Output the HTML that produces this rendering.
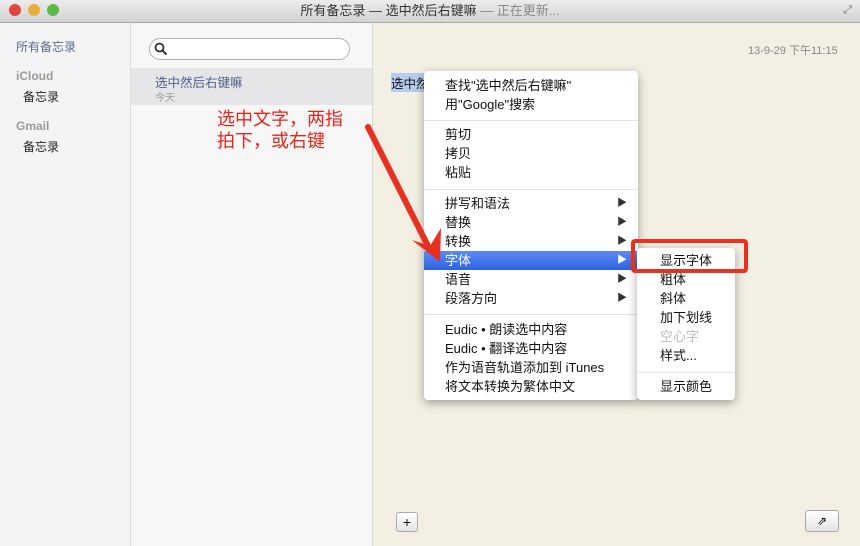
<html><head><style>
body{margin:0;width:860px;height:546px;overflow:hidden;font-family:"Liberation Sans","Noto Sans CJK SC",sans-serif;position:relative;background:#f3f0e3}
.a{position:absolute}
#tb{left:0;top:0;width:860px;height:22px;background:linear-gradient(#ececec,#d3d3d3);border-bottom:1px solid #a8a8a8;font-size:13px;color:#333;text-align:center;line-height:22px}
.dot{top:4px;width:12px;height:12px;border-radius:50%}
#sb{left:0;top:23px;width:130px;height:523px;background:#f4f4f6;border-right:1px solid #dcdcdc}
#ls{left:131px;top:23px;width:241px;height:523px;background:#f7f7f7;border-right:1px solid #d8d8d8}
#menu{left:424px;top:71px;width:214px;height:329px;background:#fff;border-radius:4px;box-shadow:0 3px 10px rgba(0,0,0,.35)}
#sub{left:637px;top:248px;width:98px;height:152px;background:#fff;border-radius:4px;box-shadow:0 3px 10px rgba(0,0,0,.35)}
.it{position:absolute;left:21px;font-size:13px;line-height:19px;color:#111;white-space:nowrap}
#sub .it{left:23px}
.ar{position:absolute;left:193px;font-size:10px;color:#333;line-height:19px}
.sep{position:absolute;left:0;width:100%;height:1px;background:#e3e3e3}
</style></head><body>
<div id="tb" class="a">所有备忘录 — 选中然后右键嘛 <span style="color:#888">— 正在更新...</span></div>
<div class="a dot" style="left:9px;background:#e0453e"></div>
<div class="a dot" style="left:28px;background:#e8ae35"></div>
<div class="a dot" style="left:47px;background:#5db94a"></div>
<div class="a" style="right:8px;top:4px;font-size:11px;color:#777">⤢</div>
<div id="sb" class="a"></div>
<div class="a" style="left:16px;top:38px;font-size:12px;color:#5a6c8c">所有备忘录</div>
<div class="a" style="left:16px;top:69px;font-size:12px;color:#9a9a9a;font-weight:bold">iCloud</div>
<div class="a" style="left:23px;top:88px;font-size:12px;color:#222">备忘录</div>
<div class="a" style="left:16px;top:119px;font-size:12px;color:#9a9a9a;font-weight:bold">Gmail</div>
<div class="a" style="left:23px;top:138px;font-size:12px;color:#222">备忘录</div>
<div id="ls" class="a"></div>
<div class="a" style="left:149px;top:38px;width:199px;height:20px;border:1px solid #b0b0b0;border-radius:11px;background:#fff"></div>
<svg class="a" style="left:154px;top:42px" width="14" height="14"><circle cx="5.5" cy="5.5" r="4" stroke="#333" stroke-width="1.8" fill="none"/><line x1="8.5" y1="8.5" x2="12.5" y2="12.5" stroke="#333" stroke-width="2"/></svg>
<div class="a" style="left:131px;top:68px;width:241px;height:37px;background:#e6e6e8"></div>
<div class="a" style="left:155px;top:72px;font-size:12.5px;color:#4e6088">选中然后右键嘛</div>
<div class="a" style="left:155px;top:89px;font-size:10px;color:#999">今天</div>
<div class="a" style="left:217px;top:108px;font-size:18px;line-height:22px;color:#e4261b">选中文字，两指<br>拍下，或右键</div>
<div class="a" style="left:748px;top:42px;font-size:11px;color:#888">13-9-29 下午11:15</div>
<div class="a" style="left:391px;top:73px;font-size:12.5px;background:#b5cdee;color:#111">选中然</div>
<div id="menu" class="a">
<div class="it" style="top:5px">查找"选中然后右键嘛"</div>
<div class="it" style="top:24px">用"Google"搜索</div>
<div class="sep" style="top:49px"></div>
<div class="it" style="top:54px">剪切</div>
<div class="it" style="top:73px">拷贝</div>
<div class="it" style="top:92px">粘贴</div>
<div class="sep" style="top:118px"></div>
<div class="it" style="top:123px">拼写和语法</div><div class="ar" style="top:123px">▶</div>
<div class="it" style="top:142px">替换</div><div class="ar" style="top:142px">▶</div>
<div class="it" style="top:161px">转换</div><div class="ar" style="top:161px">▶</div>
<div class="a" style="left:0;top:180px;width:214px;height:19px;background:linear-gradient(#5c8bf0,#2f62e2)"></div>
<div class="it" style="top:180px;color:#fff">字体</div><div class="ar" style="top:180px;color:#fff">▶</div>
<div class="it" style="top:199px">语音</div><div class="ar" style="top:199px">▶</div>
<div class="it" style="top:218px">段落方向</div><div class="ar" style="top:218px">▶</div>
<div class="sep" style="top:243px"></div>
<div class="it" style="top:249px">Eudic • 朗读选中内容</div>
<div class="it" style="top:268px">Eudic • 翻译选中内容</div>
<div class="it" style="top:287px">作为语音轨道添加到 iTunes</div>
<div class="it" style="top:306px">将文本转换为繁体中文</div>
</div>
<div id="sub" class="a">
<div class="it" style="top:3px">显示字体</div>
<div class="it" style="top:22px">粗体</div>
<div class="it" style="top:41px">斜体</div>
<div class="it" style="top:60px">加下划线</div>
<div class="it" style="top:79px;color:#bbb">空心字</div>
<div class="it" style="top:98px">样式...</div>
<div class="sep" style="top:124px"></div>
<div class="it" style="top:129px">显示颜色</div>
</div>
<div class="a" style="left:631px;top:239px;width:109px;height:26px;border:4px solid #e8321e;border-radius:4px"></div>
<div class="a" style="left:396px;top:512px;width:20px;height:18px;border:1px solid #aaa;border-radius:3px;background:linear-gradient(#fff,#e4e4e4);text-align:center;font-size:14px;line-height:18px">+</div>
<div class="a" style="left:805px;top:510px;width:32px;height:20px;border:1px solid #aaa;border-radius:3px;background:linear-gradient(#fff,#e4e4e4);text-align:center;font-size:12px;line-height:20px">⇗</div>
<svg class="a" style="left:0;top:0;z-index:5" width="860" height="546"><line x1="368" y1="127" x2="428" y2="246" stroke="#e7301f" stroke-width="6" stroke-linecap="round"/><polygon points="412,240 440,262 441,228 430,246" fill="#e7301f"/></svg>
</body></html>
